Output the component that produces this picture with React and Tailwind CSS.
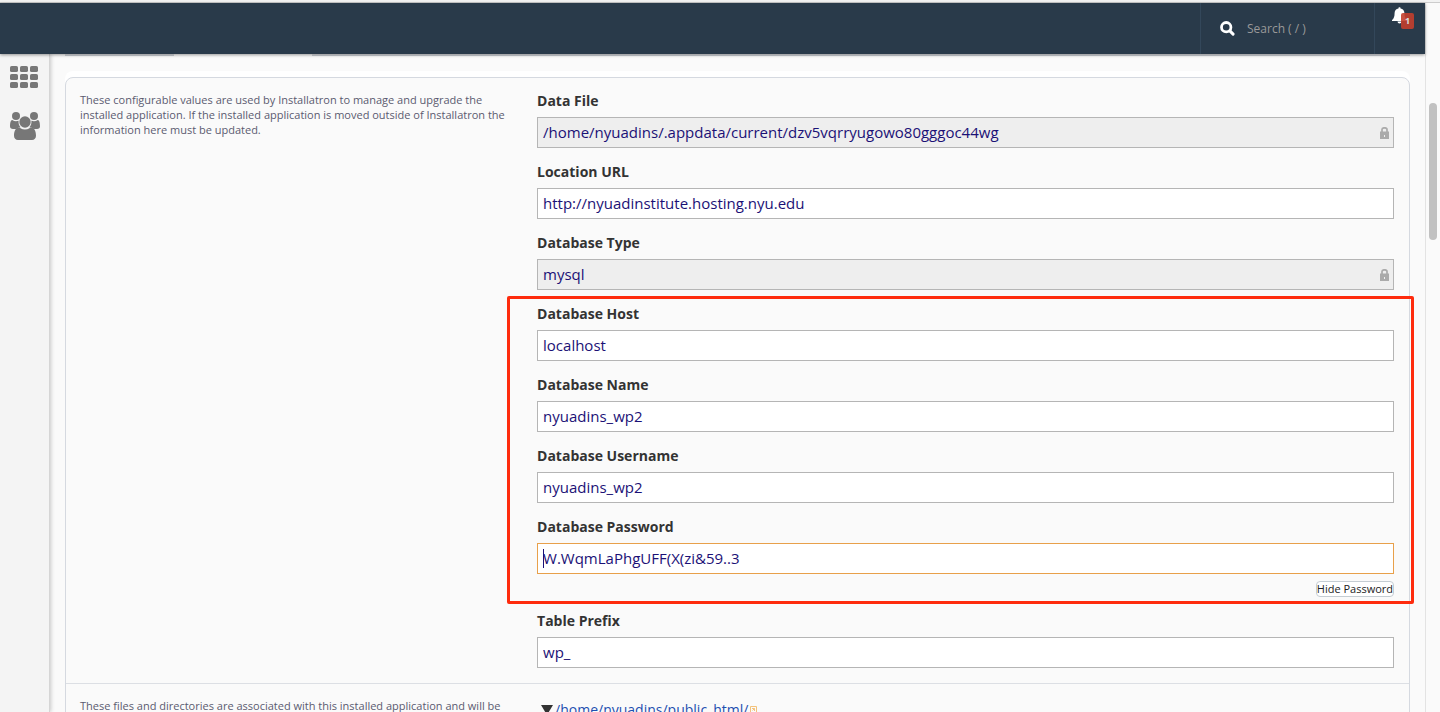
import React, { useState } from "react";

const SearchIcon = () => (
  <svg width="15" height="15" viewBox="0 0 14 14" fill="none" stroke="#fff">
    <circle cx="5.8" cy="5.8" r="4.4" strokeWidth="2.6" />
    <path d="M9.2 9.2l3 3" strokeWidth="2.8" strokeLinecap="round" />
  </svg>
);

const BellIcon = () => (
  <svg width="15" height="17" viewBox="0 0 15 17" fill="#fff">
    <path d="M7.5 0.2c.8 0 1.100.5 1 1.200 2.500.5 3.900 2.200 3.900 4.600 0 3.700.8 5.600 2.600 7.100v.9H0v-.9C1.800 11.600 2.600 9.700 2.600 6c0-2.400 1.400-4.100 3.900-4.600C6.400.7 6.700.2 7.500.2z" />
    <path d="M5.500 14.500h4a2 2 0 0 1-4 0z" />
  </svg>
);

const GridIcon = () => (
  <svg width="28" height="22" viewBox="0 0 28 22" fill="#777">
    {[0, 8, 16].map((y) =>
      [0, 10, 20].map((x) => (
        <rect key={`${x}-${y}`} x={x} y={y} width="8" height="6" rx="1.6" />
      ))
    )}
  </svg>
);

const UsersIcon = () => (
  <svg width="30" height="28" viewBox="0 0 30 28" fill="#777">
    <circle cx="6" cy="4" r="4" />
    <circle cx="24" cy="4" r="4" />
    <path d="M2.300 8c1.200.8 2.400 1.200 3.700 1.200.9 0 1.800-.2 2.600-.5-.3 2.700.5 4.900 2 6.600-1.700.1-3.100.600-4.200 1.700H3c-1.900 0-3-1-3-2.700C0 11.500.6 8 2.300 8z" />
    <path d="M27.700 8c-1.200.8-2.400 1.200-3.700 1.200-.9 0-1.800-.2-2.600-.5.3 2.700-.5 4.900-2 6.600 1.700.1 3.100.6 4.200 1.700H27c1.900 0 3-1 3-2.700 0-2.800-.6-6.300-2.300-6.300z" />
    <circle cx="15" cy="10" r="5.700" />
    <path d="M9.200 15.500c.6 0 2.300 2 5.800 2s5.200-2 5.800-2c4 0 5.200 4.300 5.200 8.300 0 2.600-1.600 4.200-4 4.200H8c-2.400 0-4-1.600-4-4.200 0-4 1.200-8.300 5.200-8.300z" />
  </svg>
);

const LockIcon = () => (
  <svg width="9" height="12" viewBox="0 0 9 12">
    <path d="M2 5V2.500C2 1.300 3 .8 4.500.8S7 1.300 7 2.500V5" fill="none" stroke="#aaa" strokeWidth="1.700" />
    <path d="M0 4.500h9V12H0z" fill="#aaa" />
    <path d="M4 8h1v2H4z" fill="#eee" />
  </svg>
);

const Field = ({ id, label, initial, locked, active }) => {
  const [value, setValue] = useState(initial);

  return (
    <div>
      <label htmlFor={id} className="block mb-1.5 text-sm leading-5 font-bold text-[#333]">
        {label}
      </label>
      <div className="relative">
        <input
          id={id}
          type="text"
          value={value}
          readOnly={locked}
          onChange={(e) => setValue(e.target.value)}
          className={`block w-full h-[31px] px-[5px] pb-0.5 border text-[15px] text-[#1b1176] focus:outline-none ${
            locked ? "bg-[#eee]" : "bg-white"
          } ${active ? "border-[#e8a04a]" : "border-[#b5b5b5]"}`}
        />
        {active && <span className="absolute left-1.5 inset-y-1.5 w-px bg-[#1b1176]" />}
        {locked && (
          <span className="absolute right-[5px] inset-y-0 flex items-center">
            <LockIcon />
          </span>
        )}
      </div>
    </div>
  );
};

const Header = () => (
  <header className="relative z-10 flex h-[51px] shrink-0 justify-end bg-[#293a4a] shadow-[0_1px_3px_rgba(0,0,0,0.4)]">
    <label className="flex w-[174px] items-center gap-3 border-l border-[#33475a] pl-[19px]">
      <SearchIcon />
      <input
        type="text"
        aria-label="Search"
        placeholder="Search ( / )"
        className="w-24 bg-transparent text-xs text-white placeholder:text-[#999] focus:outline-none"
      />
    </label>
    <a href="#notifications" aria-label="Notifications" className="relative w-[51px] border-l border-[#33475a] pt-1 pl-[17px]">
      <BellIcon />
      <span className="absolute left-[26px] top-2.5 flex h-4 w-[13px] items-center justify-center rounded-xs bg-[#c23f2d]/90 text-[9px] font-bold text-[#ddd]">
        1
      </span>
    </a>
  </header>
);

const Sidebar = () => (
  <nav className="flex w-[50px] shrink-0 flex-col gap-6 border-r border-[#d5d5d5] bg-[#f4f4f4] pt-3 pl-2.5 shadow-[1px_0_4px_rgba(0,0,0,0.2)]">
    <a href="#home" aria-label="Home">
      <GridIcon />
    </a>
    <a href="#users" aria-label="Users">
      <UsersIcon />
    </a>
  </nav>
);

const Section = ({ description, children }) => (
  <section className="flex">
    <p className="w-[35%] shrink-0 pt-3.5 pr-7 pl-3.5 text-[11px] leading-[15px] text-[#5b5b70]">
      {description}
    </p>
    <div className="flex-1 pt-[13px] pr-[15px] pb-[15px] pl-px">{children}</div>
  </section>
);

const App = () => {
  return (
    <div className="flex h-screen flex-col overflow-hidden bg-[#fafafa] font-['Open_Sans','Noto_Sans',sans-serif]">
      <div className="h-[3px] shrink-0 border-b border-[#ccc] bg-[#f2f2f2]" />
      <div className="flex min-h-0 flex-1">
        <div className="flex min-w-0 flex-1 flex-col">
          <Header />
          <div className="flex min-h-0 flex-1">
            <Sidebar />
            <main className="min-w-0 flex-1 overflow-hidden pr-[15px] pl-[15px]">
              <div className="flex h-0.5 justify-between">
                <div className="w-[109px] border-b border-[#ccd0d6] bg-[#dfe1e5]" />
                <div className="ml-[138px] flex-1 border-b border-[#ccd0d6] bg-[#dfe1e5]" />
              </div>
              <div className="mt-[15px] rounded-t-lg bg-white pt-1.5">
                <div className="divide-y divide-[#dcdfe4] rounded-t-lg border border-[#d5d9e0] bg-[#fafafa]">
                  <Section description="These configurable values are used by Installatron to manage and upgrade the installed application. If the installed application is moved outside of Installatron the information here must be updated.">
                    <div className="flex flex-col gap-3.5">
                      <Field id="data-file" label="Data File" initial="/home/nyuadins/.appdata/current/dzv5vqrryugowo80gggoc44wg" locked />
                      <Field id="location-url" label="Location URL" initial="http://nyuadinstitute.hosting.nyu.edu" />
                      <Field id="db-type" label="Database Type" initial="mysql" locked />
                      <div className="relative flex flex-col gap-3.5">
                        <Field id="db-host" label="Database Host" initial="localhost" />
                        <Field id="db-name" label="Database Name" initial="nyuadins_wp2" />
                        <Field id="db-user" label="Database Username" initial="nyuadins_wp2" />
                        <div>
                          <Field id="db-pass" label="Database Password" initial="W.WqmLaPhgUFF(X(zi&59..3" active />
                          <div className="mt-[7px] flex h-4 justify-end">
                            <button
                              type="button"
                              className="rounded border border-[#c5cdd3] bg-white text-[11px] leading-[14px] text-[#222]"
                            >
                              Hide Password
                            </button>
                          </div>
                        </div>
                        <div className="pointer-events-none absolute -top-2 -right-5 -bottom-[7px] -left-[30px] z-10 rounded-xs border-3 border-[#fe2b0d]" />
                      </div>
                      <Field id="prefix" label="Table Prefix" initial="wp_" />
                    </div>
                  </Section>
                  <Section description="These files and directories are associated with this installed application and will be removed if the application is uninstalled.">
                    <div className="flex items-center gap-0.5 pl-1 text-sm leading-[26px] text-[#1d4fb0]">
                      <svg width="12" height="10" viewBox="0 0 12 10" fill="#333">
                        <path d="M0 0h12L6 10z" />
                      </svg>
                      <a href="#public_html">/home/nyuadins/public_html/</a>
                      <svg width="7" height="9" viewBox="0 0 7 9" fill="none" stroke="#f3c27b">
                        <path d="M.5.5h6v8h-6zM2 2.500h2.500v2.500M4.500 2.500L2.500 4.500" />
                      </svg>
                    </div>
                  </Section>
                </div>
              </div>
            </main>
          </div>
        </div>
        <div className="w-[15px] shrink-0 border-l border-[#e3e3e3] bg-[#fafafa] pt-[100px] pl-[3px]">
          <div className="h-[137px] w-2 rounded-full bg-[#c1c1c1]" />
        </div>
      </div>
    </div>
  );
};

export default App;
